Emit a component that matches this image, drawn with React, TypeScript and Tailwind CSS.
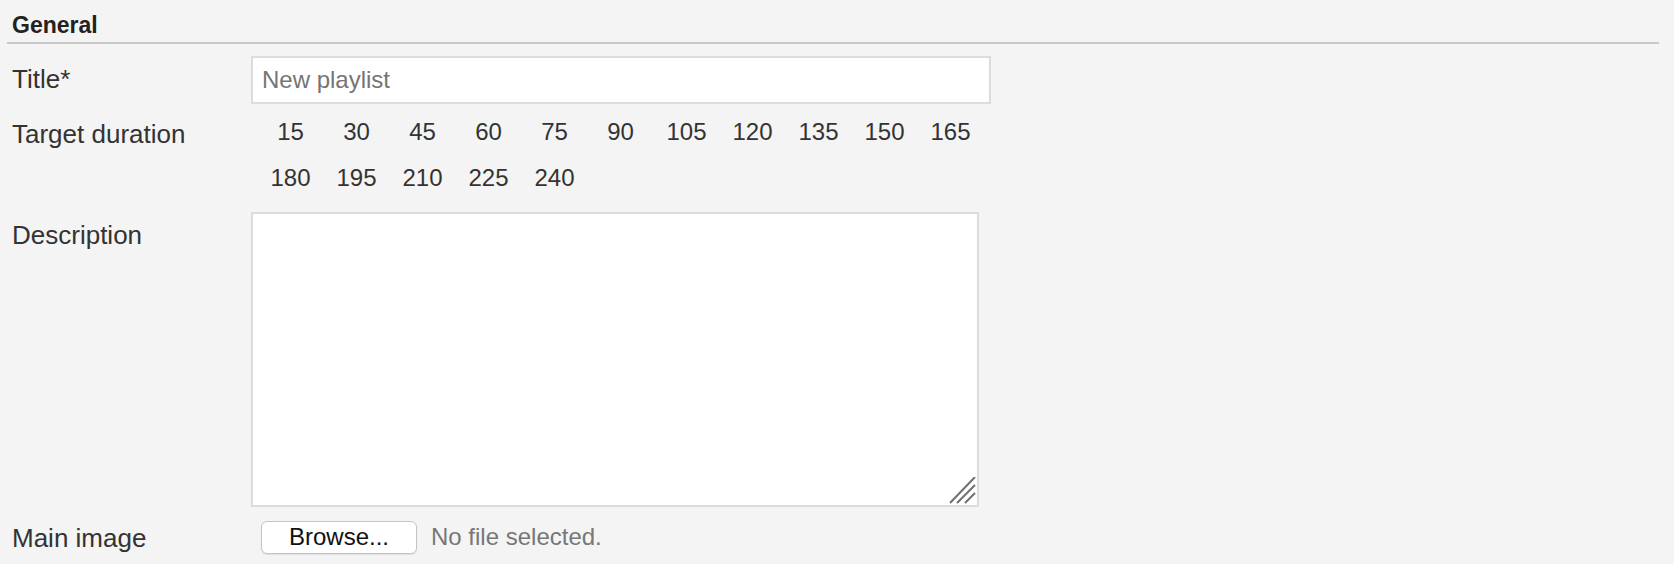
const durations = [15, 30, 45, 60, 75, 90, 105, 120, 135, 150, 165, 180, 195, 210, 225, 240];

const ResizeGrip = () => (
  <svg
    width="28"
    height="28"
    viewBox="0 0 28 28"
    className="absolute right-[2px] bottom-[2px] pointer-events-none"
  >
    <g stroke="#6f6f6f" strokeWidth="2" strokeLinecap="butt">
      <line x1="26" y1="0" x2="1" y2="26" />
      <line x1="26" y1="8" x2="8" y2="26" />
      <line x1="26" y1="16" x2="16" y2="26" />
    </g>
  </svg>
);

const App = () => {
  return (
    <div className="w-full min-h-screen bg-[#f4f4f4] pl-[7px] pr-[15px] font-['Liberation_Sans',Arial,sans-serif] text-[#333]">
      {/* section header */}
      <div className="pt-[12px] pb-[4px] pl-[5px] border-b-2 border-[#c8c8c8] text-[23px] leading-[26px] font-bold text-[#222]">
        General
      </div>

      {/* title */}
      <div className="flex items-start mt-[12px]">
        <label className="w-[244px] pl-[5px] pt-[8px] text-[26px] leading-[30px]">Title*</label>
        <input
          type="text"
          placeholder="New playlist"
          className="w-[740px] h-[48px] bg-white border-2 border-[#dcdcdc] px-[9px] text-[24px] text-[#333] placeholder:text-[#757575] outline-none"
        />
      </div>

      {/* target duration */}
      <div className="flex items-start mt-[5px]">
        <div className="w-[244px] pl-[5px] pt-[10px] text-[26px] leading-[30px]">Target duration</div>
        <div className="flex flex-wrap w-[740px] pl-[6.5px]">
          {durations.map((d) => (
            <span key={d} className="w-[66px] text-center text-[24px] leading-[46px] text-[#333]">
              {d}
            </span>
          ))}
        </div>
      </div>

      {/* description */}
      <div className="flex items-start mt-[11px]">
        <label className="w-[244px] pl-[5px] pt-[8px] text-[26px] leading-[30px]">Description</label>
        <div className="relative w-[728px] h-[295px]">
          <textarea className="w-full h-full bg-white border-2 border-[#dcdcdc] resize-none outline-none p-[8px] text-[24px]" />
          <ResizeGrip />
        </div>
      </div>

      {/* main image */}
      <div className="flex items-start mt-[12px]">
        <label className="w-[244px] pl-[5px] pt-[4px] text-[26px] leading-[30px]">Main image</label>
        <div className="flex items-center gap-[14px] ml-[10px]">
          <button className="w-[156px] h-[33px] bg-white border border-[#c4c4c4] rounded-[6px] shadow-[0_1px_1px_rgba(0,0,0,0.08)] text-[24px] leading-none text-[#111]">
            Browse...
          </button>
          <span className="text-[24px] text-[#777]">No file selected.</span>
        </div>
      </div>
    </div>
  );
};

export default App;
